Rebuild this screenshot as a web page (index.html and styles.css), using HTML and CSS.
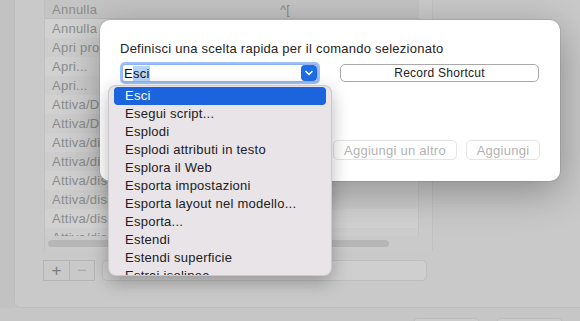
FILE: index.html
```html
<!DOCTYPE html>
<html lang="it">

<head>
  <meta charset="UTF-8">
  <meta name="viewport" content="width=device-width, initial-scale=1.0">
  <title>Scelte rapide</title>
  <link rel="stylesheet" href="styles.css">
</head>

<body>
  <div class="window">
    <div class="gutter"></div>
    <div class="group">
      <div class="list">
        <div class="rows">
          <div class="row current"><span class="cmd">Annulla</span><span class="keys">^[</span></div>
          <div class="row"><span class="cmd">Annulla</span></div>
          <div class="row"><span class="cmd">Apri progetto...</span></div>
          <div class="row"><span class="cmd">Apri...</span></div>
          <div class="row"><span class="cmd">Apri...</span></div>
          <div class="row"><span class="cmd">Attiva/Disattiva</span></div>
          <div class="row"><span class="cmd">Attiva/Disattiva</span></div>
          <div class="row"><span class="cmd">Attiva/disattiva</span></div>
          <div class="row"><span class="cmd">Attiva/disattiva</span></div>
          <div class="row"><span class="cmd">Attiva/disattiva</span></div>
          <div class="row"><span class="cmd">Attiva/disattiva</span></div>
          <div class="row"><span class="cmd">Attiva/disattiva</span></div>
          <div class="row"><span class="cmd">Attiva/disattiva</span></div>
        </div>
        <div class="vscroll"></div>
        <div class="hscroll"><div class="thumb"></div></div>
      </div>
      <div class="controls">
        <div class="plusminus">
          <span class="pm">+</span>
          <span class="pm off">&minus;</span>
        </div>
        <div class="field"></div>
      </div>
    </div>
  </div>
  <div class="footer">
    <span class="fbtn"></span>
    <span class="fbtn"></span>
  </div>

  <!-- sheet dialog over the window -->
  <div class="sheet">
    <p class="prompt">Definisci una scelta rapida per il comando selezionato</p>
    <div class="line">
      <div class="combo">
        <span class="value">E<span class="sel">sci</span></span>
        <span class="arrow">
          <svg width="8" height="6" viewBox="0 0 8 6"><path d="M1 1.5 L4 4.5 L7 1.5" fill="none" stroke="#fff" stroke-width="1.6" stroke-linecap="round" stroke-linejoin="round"/></svg>
        </span>
      </div>
      <button class="record">Record Shortcut</button>
    </div>
    <div class="actions">
      <button class="ghost wide">Aggiungi un altro</button>
      <button class="ghost">Aggiungi</button>
    </div>
  </div>

  <ul class="menu">
    <li class="active">Esci</li>
    <li>Esegui script...</li>
    <li>Esplodi</li>
    <li>Esplodi attributi in testo</li>
    <li>Esplora il Web</li>
    <li>Esporta impostazioni</li>
    <li>Esporta layout nel modello...</li>
    <li>Esporta...</li>
    <li>Estendi</li>
    <li>Estendi superficie</li>
    <li>Estrai isolinee</li>
  </ul>
</body>

</html>
```

FILE: styles.css
```css
* {
  box-sizing: border-box;
}

body {
  margin: 0;
  width: 580px;
  height: 321px;
  overflow: hidden;
  position: relative;
  background-color: #c6c6c6;
  font-family: 'Liberation Sans', Arial, sans-serif;
  font-size: 13px;
  letter-spacing: 0.25px;
  color: #222;
}

/* dimmed window behind the sheet */
.window {
  display: flex;
  height: 308px;
}

.gutter {
  width: 14px;
  background-color: #c2c2c2;
}

.group {
  flex: 1;
  margin-right: -20px;
  padding-left: 29px;
  border-left: 1px solid #bdbdbd;
  border-bottom: 1px solid #bdbdbd;
  border-bottom-left-radius: 6px;
  background-color: #c9c9c9;
}

.list {
  position: relative;
  display: flex;
  flex-wrap: wrap;
  width: 389px;
  height: 251px;
  border: 1px solid #c0c0c0;
  border-top: none;
  background-color: #cdcdcd;
}

.rows {
  width: 373px;
  height: 236px;
  overflow: hidden;
}

.row {
  display: flex;
  height: 19px;
  align-items: center;
  padding-left: 7px;
  color: #8c8c8c;
  white-space: nowrap;
}

.row:nth-child(even) {
  background-color: #d1d1d1;
}

.row.current {
  background-color: #c4c4c4;
  border-bottom: 1px solid #b9b9b9;
}

.cmd {
  width: 228px;
}

.keys {
  color: #8a8a8a;
}

.vscroll {
  width: 14px;
  height: 236px;
  border-left: 1px solid #c3c3c3;
  background-color: #cbcbcb;
}

.hscroll {
  width: 100%;
  height: 15px;
  padding: 4px 0 0 3px;
  background-color: #cacaca;
}

.thumb {
  width: 341px;
  height: 7px;
  border-radius: 4px;
  background-color: #b6b6b6;
}

.controls {
  display: flex;
  gap: 7px;
  margin-top: 9px;
  margin-left: -1px;
}

.plusminus {
  display: flex;
  border: 1px solid #b5b5b5;
}

.pm {
  width: 25px;
  height: 19px;
  display: flex;
  align-items: center;
  justify-content: center;
  font-size: 17px;
  color: #7c7c7c;
}

.pm.off {
  border-left: 1px solid #b5b5b5;
  color: #aaaaaa;
}

.field {
  width: 325px;
  height: 21px;
  border: 1px solid #bebebe;
  border-radius: 5px;
  background-color: #cfcfcf;
}

.footer {
  display: flex;
  gap: 16px;
  height: 13px;
  overflow: hidden;
  padding: 10px 0 0 413px;
}

.fbtn {
  width: 67px;
  height: 22px;
  flex-shrink: 0;
  border: 1px solid #bcbcbc;
  border-radius: 5px;
  background-color: #cbcbcb;
}

/* sheet */
.sheet {
  position: absolute;
  left: 100px;
  top: 20px;
  width: 460px;
  height: 161px;
  padding: 20px 20px 20px;
  border-radius: 10px;
  background-color: #fff;
  box-shadow: 0 0 0 1px rgba(0, 0, 0, 0.08), 0 10px 40px rgba(0, 0, 0, 0.32);
}

.prompt {
  margin: 0;
  line-height: 17px;
  color: #242424;
}

.line {
  display: flex;
  gap: 20px;
  margin-top: 6px;
}

.combo {
  display: flex;
  align-items: center;
  justify-content: space-between;
  width: 194px;
  height: 16px;
  margin: 2px 3px 0;
  padding-left: 1px;
  background-color: #fff;
  border-radius: 2px;
  box-shadow: 0 0 0 1px #8fb3ee, 0 0 0 3px rgba(95, 150, 240, 0.6);
}

.value {
  line-height: 15px;
  color: #111;
}

.sel {
  background-color: #b5d4fb;
}

.arrow {
  display: flex;
  align-items: center;
  justify-content: center;
  width: 16px;
  height: 16px;
  border-radius: 4px;
  background-color: #1f6de6;
}

button {
  font-family: inherit;
  letter-spacing: inherit;
  background-color: #fff;
  border-radius: 5px;
  padding: 0;
  outline: none;
}

.record {
  width: 199px;
  height: 18px;
  margin-top: 1px;
  border: 1px solid #a9a9a9;
  font-size: 12px;
  color: #222;
}

.actions {
  display: flex;
  justify-content: flex-end;
  gap: 9px;
  margin-top: 58px;
}

.ghost {
  width: 74px;
  height: 20px;
  border: 1px solid #e4e4e4;
  font-size: 13px;
  color: #b3b3b3;
}

.ghost.wide {
  width: 124px;
}

/* dropdown list */
.menu {
  position: absolute;
  left: 108px;
  top: 85px;
  width: 224px;
  height: 191px;
  margin: 0;
  padding: 1px 5px;
  list-style: none;
  overflow: hidden;
  border-radius: 8px;
  background-color: #e9e4e8;
  border: 1px solid rgba(0, 0, 0, 0.12);
  box-shadow: 0 6px 18px rgba(0, 0, 0, 0.28);
}

.menu li {
  height: 18px;
  line-height: 18px;
  padding-left: 11px;
  border-radius: 4px;
  white-space: nowrap;
  color: #202020;
}

.menu li.active {
  background-color: #1c63de;
  color: #fff;
}
```
